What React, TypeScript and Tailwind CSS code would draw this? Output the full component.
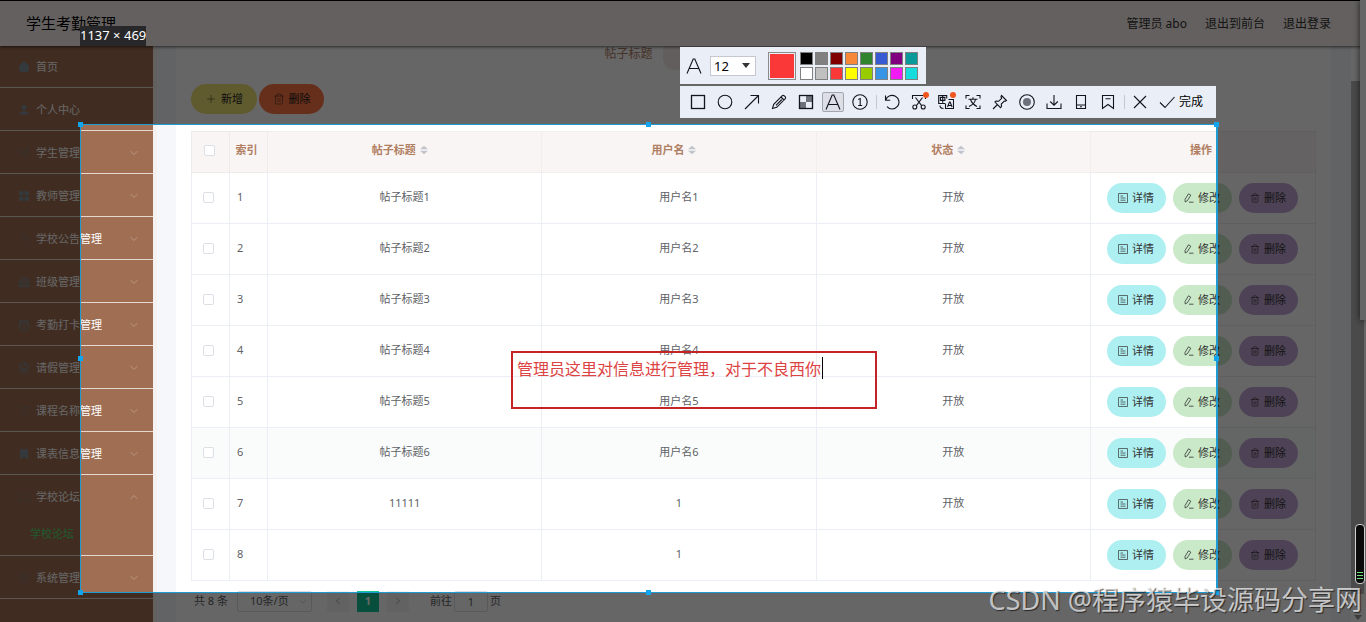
import { useState } from 'react';
import type { ReactNode } from 'react';
import {
  Bookmark,
  Building2,
  CalendarCheck,
  ChevronDown,
  ChevronLeft,
  ChevronRight,
  ChevronUp,
  FileText,
  House,
  LayoutGrid,
  List,
  MessageSquare,
  Plus,
  Send,
  Settings,
  Trash2,
  User,
} from 'lucide-react';
import type { LucideIcon } from 'lucide-react';

type MenuEntry = { name: string; icon: LucideIcon; tone: string; arrow?: boolean; children?: string[] };

const menu: MenuEntry[] = [
  { name: '首页', icon: House, tone: 'text-[#7f8f98] fill-[#7f8f98]' },
  { name: '个人中心', icon: User, tone: 'text-[#7f8f98] fill-[#7f8f98]' },
  { name: '学生管理', icon: Send, tone: 'text-[#8f7c72]', arrow: true },
  { name: '教师管理', icon: LayoutGrid, tone: 'text-[#7f8f98] fill-[#7f8f98]', arrow: true },
  { name: '学校公告管理', icon: List, tone: 'text-[#8f7c72]', arrow: true },
  { name: '班级管理', icon: Building2, tone: 'text-[#7f8f98]', arrow: true },
  { name: '考勤打卡管理', icon: CalendarCheck, tone: 'text-[#7f8f98]', arrow: true },
  { name: '请假管理', icon: FileText, tone: 'text-[#7f8f98]', arrow: true },
  { name: '课程名称管理', icon: List, tone: 'text-[#8f7c72]', arrow: true },
  { name: '课表信息管理', icon: Bookmark, tone: 'text-[#7f8f98] fill-[#7f8f98]', arrow: true },
  { name: '学校论坛', icon: MessageSquare, tone: 'text-[#8f7c72]', arrow: true, children: ['学校论坛'] },
  { name: '系统管理', icon: Settings, tone: 'text-[#8f7c72]', arrow: true },
];

const posts = [
  { id: 1, title: '帖子标题1', user: '用户名1', status: '开放' },
  { id: 2, title: '帖子标题2', user: '用户名2', status: '开放' },
  { id: 3, title: '帖子标题3', user: '用户名3', status: '开放' },
  { id: 4, title: '帖子标题4', user: '用户名4', status: '开放' },
  { id: 5, title: '帖子标题5', user: '用户名5', status: '开放' },
  { id: 6, title: '帖子标题6', user: '用户名6', status: '开放' },
  { id: 7, title: '11111', user: '1', status: '开放' },
  { id: 8, title: '', user: '1', status: '' },
];

const palette = [
  { name: '黑色', bg: 'bg-black' },
  { name: '灰色', bg: 'bg-[#808080]' },
  { name: '深红', bg: 'bg-[#800000]' },
  { name: '橙色', bg: 'bg-[#f7883a]' },
  { name: '绿色', bg: 'bg-[#308430]' },
  { name: '蓝色', bg: 'bg-[#385ad3]' },
  { name: '紫色', bg: 'bg-[#800080]' },
  { name: '青色', bg: 'bg-[#099a99]' },
  { name: '白色', bg: 'bg-white' },
  { name: '浅灰', bg: 'bg-[#c0c0c0]' },
  { name: '红色', bg: 'bg-[#fb3838]' },
  { name: '黄色', bg: 'bg-[#ffff00]' },
  { name: '草绿', bg: 'bg-[#99cc00]' },
  { name: '天蓝', bg: 'bg-[#3894e4]' },
  { name: '洋红', bg: 'bg-[#f31bf3]' },
  { name: '亮青', bg: 'bg-[#16dcdc]' },
];

const Glyph = ({ children }: { children: ReactNode }) => (
  <svg viewBox="0 0 16 16" className="size-4" fill="none" stroke="#14141f" strokeWidth="1.1">
    {children}
  </svg>
);

const LetterA = () => (
  <Glyph>
    <path d="M1 15.5 7.2 1h1.6L15 15.5M3.6 10.5h8.8" />
  </Glyph>
);

const shapeTools = [
  { name: '矩形', icon: <Glyph><rect x="1.5" y="1.5" width="13" height="13" strokeWidth="1.3" /></Glyph> },
  { name: '椭圆', icon: <Glyph><circle cx="8" cy="8" r="6.8" /></Glyph> },
  { name: '箭头', icon: <Glyph><path d="M1 15 14.5 1.5M6.5 1.5h8v8" /></Glyph> },
  { name: '画笔', icon: <Glyph><path d="m1.5 14.5 1.2-4.2 8.600-8.600q.9-.7 1.800 0l1.200 1.200q.7.9 0 1.800l-8.600 8.600zM10 3l3 3M5 11.300l5.800-5.800" /></Glyph> },
  {
    name: '马赛克',
    icon: (
      <Glyph>
        <path d="M8 2h6v6H8zM2 8h6v6H2z" fill="#6d717b" stroke="none" />
        <rect x="1.5" y="1.5" width="13" height="13" strokeWidth="1.3" />
      </Glyph>
    ),
  },
  { name: '文字', icon: <LetterA />, active: true },
  { name: '序号', icon: <Glyph><circle cx="8" cy="8" r="7.2" /><path d="M6.3 5.4 8.2 4.5v7M6.2 11.5h4" /></Glyph> },
];

const actionTools = [
  { name: '撤销', icon: <Glyph><path d="M1.5 1.5v4.7h4.7M1.7 6A6.8 6.8 0 1 1 3 12.6" /></Glyph> },
  {
    name: '截图',
    badge: true,
    icon: (
      <Glyph>
        <path d="M1.5 5V1.5h13V5M4.5 3.5l6.3 8.3M11.5 3.5l-6.3 8.3" />
        <circle cx="3.8" cy="13" r="2" />
        <circle cx="12.2" cy="13" r="2" />
      </Glyph>
    ),
  },
  {
    name: '翻译',
    badge: true,
    icon: (
      <Glyph>
        <path d="M7 9.5H.7V1.5h8v3M2.4 3.4h4.5v3H2.4zM4.7 2v6.8" />
        <path d="M10.5 5.5h5v9h-8v-5M9.5 13l2-5h.6l2 5M10 11.5h3.5M2 11.5q0 3 3.5 3" />
      </Glyph>
    ),
  },
  { name: '文字识别', icon: <Glyph><path d="M1 4.5V1.5h3.5M11.5 1.5H15v3M15 11.5v3h-3.5M4.5 14.5H1v-3M3.5 5.2h9M8 3.2v2M4 12.5q5.5-2.5 6.5-7M5.5 5.5q1.5 4.5 6.5 7" /></Glyph> },
  { name: '钉住', icon: <Glyph><path d="M9.5 1.5l5 5-1 .7-1.2-.2-3 3 .2 2.6-1 1L3 8.1l1-1 2.6.2 3-3-.6-1.6zM5.5 10.5 1 15" /></Glyph> },
  { name: '录屏', icon: <Glyph><circle cx="8" cy="8" r="7.3" /><circle cx="8" cy="8" r="4" fill="#6d717b" stroke="none" /></Glyph> },
  { name: '保存', icon: <Glyph><path d="M8 1v10M4.2 7.5 8 11.2l3.8-3.7M1 9.5v5h14v-5" /></Glyph> },
  { name: '发送到手机', icon: <Glyph><path d="M3.5 1.5h9v13h-9zM3.5 11h9M7 12.8h2" /></Glyph> },
  { name: '收藏', icon: <Glyph><path d="M2.5 1.5h11v13L8 10.5l-5.5 4zM5.5 4.8h5" /></Glyph> },
];

const ToolButton = ({ name, icon, active, badge }: { name: string; icon: ReactNode; active?: boolean; badge?: boolean }) => (
  <button aria-label={name} title={name} className="relative flex w-[27px] items-center justify-center">
    <span className={active ? 'flex h-5 w-[22px] items-center justify-center rounded-xs border border-[#a3a6ad] bg-[#dcdfe6]' : 'flex'}>
      {icon}
    </span>
    {badge && <span className="absolute -top-0.5 right-1 size-1.5 rounded-full bg-[#f0561d]" />}
  </button>
);

const SortMark = () => (
  <svg viewBox="0 0 8 10" className="inline-block h-2.5 w-2 fill-[#c0c4cc]">
    <path d="M0 4.2 4 .8l4 3.4zM0 5.8h8L4 9.2z" />
  </svg>
);

const DetailIcon = () => (
  <svg viewBox="0 0 10 10" className="size-2.5" fill="none" stroke="currentColor" strokeWidth=".7">
    <path d="M.5.5h9v9h-9zM2.500 3h2.500M2.500 5h5M2.500 7.200h5" />
  </svg>
);

const EditIcon = () => (
  <svg viewBox="0 0 10 10" className="size-2.5" fill="none" stroke="currentColor" strokeWidth=".8">
    <path d="M1.2 9 1 6.500 4.500.8l2.300 1.400-3.500 5.600zM5 9.200h4.500" />
  </svg>
);

const pill = 'flex h-[30px] w-[59px] items-center justify-center gap-1 rounded-full text-[11px] text-[#333]';
const tick = 'mx-auto block size-[11px] appearance-none rounded-xs border border-[#dcdfe6] bg-white';

const Sidebar = () => (
  <nav className="-mt-px w-[153px] shrink-0 bg-[#a06e52] text-[11px] text-white">
    <ul>
      {menu.map((m) => (
        <li key={m.name} className="border-b border-[#e6d8d0]">
          <a href="#" className="flex h-[42px] items-center pt-0.5 pr-[13px] pl-[18px]">
            <m.icon className={`size-3 ${m.tone}`} strokeWidth={2} />
            <span className="ml-1.5 flex-1">{m.name}</span>
            {m.arrow && !m.children && <ChevronDown className="size-3 text-[#c3a391]" strokeWidth={1.5} />}
            {m.children && <ChevronUp className="size-3 text-[#c3a391]" strokeWidth={1.5} />}
          </a>
          {m.children?.map((c) => (
            <a key={c} href="#" className="flex h-[38px] items-center pb-1 pl-[30px] text-[#4fe070]">
              {c}
            </a>
          ))}
        </li>
      ))}
    </ul>
  </nav>
);

const PostTable = () => (
  <table className="mt-[17px] w-full table-fixed border-collapse border border-[#ebeef5] text-center text-[11px] text-[#606266]">
    <colgroup>
      <col className="w-[38px]" />
      <col className="w-[38px]" />
      <col />
      <col />
      <col />
      <col className="w-[225px]" />
    </colgroup>
    <thead className="bg-[#f9f5f4] text-[#b07e62]">
      <tr className="h-[41px]">
        <th className="border border-[#efebeb] p-0 pr-0.5 pb-1">
          <input type="checkbox" aria-label="全选" className={tick} />
        </th>
        <th className="border border-[#efebeb] p-0 pr-1 pb-1">索引</th>
        {['帖子标题', '用户名', '状态'].map((h) => (
          <th key={h} className="border border-[#f2eeee] p-0 pr-2.5 pb-1">
            <span className="inline-flex items-center gap-1">
              {h} <SortMark />
            </span>
          </th>
        ))}
        <th className="border border-[#efebeb] p-0 pr-1 pb-1">操作</th>
      </tr>
    </thead>
    <tbody>
      {posts.map((p) => (
        <tr key={p.id} className={p.id === 6 ? 'h-[51px] bg-[#fafcfc]' : 'h-[51px]'}>
          <td className="border border-[#ebeef5] p-0 pr-1 pb-0.5">
            <input type="checkbox" aria-label={`选择第${p.id}行`} className={tick} />
          </td>
          <td className="border border-[#ebeef5] p-0 pb-0.5 pl-[7px] text-left">{p.id}</td>
          <td className="border border-[#ebeef5] p-0 pb-0.5">{p.title}</td>
          <td className="border border-[#ebeef5] p-0 pb-0.5">{p.user}</td>
          <td className="border border-[#ebeef5] p-0 pb-0.5">{p.status}</td>
          <td className="border border-[#ebeef5] p-0 pr-0.5">
            <div className="flex justify-center gap-[7px]">
              <button className={`${pill} bg-[#aef0f2]`}><DetailIcon />详情</button>
              <button className={`${pill} bg-[#c9e9c9]`}><EditIcon />修改</button>
              <button className={`${pill} bg-[#c4a8d6]`}><Trash2 className="size-2.5" strokeWidth={1.5} />删除</button>
            </div>
          </td>
        </tr>
      ))}
    </tbody>
  </table>
);

const Pagination = () => (
  <div className="mt-[9px] flex h-[22px] items-center text-[11px] text-[#606266]">
    <span className="ml-[3px]">共 8 条</span>
    <div className="relative ml-[9px]">
      <select aria-label="每页条数" className="block h-[21px] w-[75px] appearance-none rounded-xs border border-[#dcdfe6] pl-3 text-[11px]">
        <option>10条/页</option>
      </select>
      <ChevronDown className="pointer-events-none absolute top-1.5 right-1 size-2.5 text-[#c0c4cc]" />
    </div>
    <button aria-label="上一页" className="ml-[15px] flex h-[21px] w-[22px] items-center justify-center bg-[#f4f4f5] text-[#a8abb2]">
      <ChevronLeft className="size-3" />
    </button>
    <button className="ml-2 h-[21px] w-[22px] bg-[#12c296] font-bold text-white">1</button>
    <button aria-label="下一页" className="ml-2 flex h-[21px] w-[22px] items-center justify-center bg-[#f4f4f5] text-[#a8abb2]">
      <ChevronRight className="size-3" />
    </button>
    <label className="ml-[21px] flex items-center gap-0.5">
      前往
      <input defaultValue="1" className="h-[21px] w-[34px] rounded-xs border border-[#dcdfe6] text-center text-[11px]" />
      页
    </label>
  </div>
);

const CaptureTools = () => {
  const [size, setSize] = useState('12');

  return (
    <div className="absolute top-[47px] right-[150px] flex flex-col items-start gap-0.5 text-black">
      <div className="flex h-[37px] items-center bg-[#e9eef7] pr-2 pl-1.5">
        <LetterA />
        <div className="relative ml-2">
          <select
            aria-label="字号"
            value={size}
            onChange={(e) => setSize(e.target.value)}
            className="block h-5 w-[46px] appearance-none border border-[#c5c8ce] bg-white pl-[3px] text-[13px] leading-4"
          >
            <option>12</option>
            <option>14</option>
            <option>16</option>
          </select>
          <svg viewBox="0 0 8 5" className="pointer-events-none absolute top-[7px] right-1.5 h-[5px] w-2 fill-[#333]">
            <path d="M0 0h8L4 5z" />
          </svg>
        </div>
        <button aria-label="当前颜色" className="ml-3 size-7 border border-[#8a8a8a] bg-[#fb3838] bg-clip-content p-px" />
        <div className="ml-1 grid grid-cols-8 gap-0.5">
          {palette.map((c) => (
            <button key={c.name} aria-label={c.name} className={`size-[13px] border border-[#808080] ${c.bg}`} />
          ))}
        </div>
      </div>

      <div className="flex h-8 items-center bg-[#e9eef7] pr-[13px] pl-[5px]">
        {shapeTools.map((t) => (
          <ToolButton key={t.name} {...t} />
        ))}
        <span className="mx-0.5 h-3.5 w-px bg-[#c3c7cf]" />
        {actionTools.map((t) => (
          <ToolButton key={t.name} {...t} />
        ))}
        <span className="mx-0.5 h-3.5 w-px bg-[#c3c7cf]" />
        <ToolButton name="取消" icon={<Glyph><path d="m2 2 12 12M14 2 2 14" /></Glyph>} />
        <button className="flex items-center gap-1 pl-[5px] text-xs">
          <Glyph><path d="m1 8.5 5 5L15.5 3" /></Glyph>
          完成
        </button>
      </div>
    </div>
  );
};

const handles = [
  '-top-[3px] -left-[3px]',
  '-top-[3px] left-[calc(50%-3px)]',
  '-top-[3px] -right-[3px]',
  'top-[calc(50%-3px)] -left-[3px]',
  'top-[calc(50%-3px)] -right-[3px]',
  '-bottom-[3px] -left-[3px]',
  '-bottom-[3px] left-[calc(50%-3px)]',
  '-bottom-[3px] -right-[3px]',
];

const CaptureLayer = () => (
  <>
    {/* everything outside the selection is dimmed by its shadow */}
    <div className="pointer-events-none absolute top-[124px] right-[148px] left-20 h-[469px] border border-r-2 border-[#1f9bd3] shadow-[0_0_0_3000px_rgba(0,0,0,0.6)]">
      {handles.map((h) => (
        <span key={h} className={`absolute size-[5px] bg-[#12a5ee] ${h}`} />
      ))}
    </div>
    <div className="absolute top-[26px] left-20 h-5 bg-[#28282a] text-[13px] leading-[18px] whitespace-nowrap text-white">1137 × 469</div>

    <div className="absolute top-[351px] left-[511px] flex h-[58px] w-[366px] items-start border-2 border-[#c42427] pt-1 pl-1">
      <input aria-label="标注文字" defaultValue="管理员这里对信息进行管理，对于不良西你" className="h-6 w-[305px] text-base text-[#dd4343]" />
      <span className="h-[22px] w-px bg-black" />
    </div>

    <CaptureTools />
  </>
);

const App = () => (
  <div className="relative flex min-h-screen flex-col overflow-hidden bg-white font-['Noto_Sans','Noto_Sans_CJK_SC',sans-serif]">
    <header className="relative z-10 flex h-[46px] items-center justify-between border-t border-black bg-[#f7f1ed] pr-[35px] pl-[26px] text-[#333] shadow-[0_1px_3px_rgba(0,0,0,0.6)]">
      <h1 className="text-[15px] text-black">学生考勤管理</h1>
      <div className="flex gap-[18px] text-xs">
        <span>管理员 abo</span>
        <a href="#">退出到前台</a>
        <a href="#">退出登录</a>
      </div>
    </header>

    <div className="flex flex-1">
      <Sidebar />
      <main className="flex min-w-0 flex-1 overflow-hidden border-l-4 border-[#f6f2f1] bg-[#f5f7fb] pr-5 pl-[19px]">
        <section className="min-w-0 flex-1 bg-white px-[15px]">
          <form className="-mt-[10px] flex h-9 items-center justify-center gap-2.5 text-xs text-[#b07e62]">
            <label htmlFor="title">帖子标题</label>
            <input id="title" className="h-8 w-[240px] rounded-xl bg-[#f3ebe9]" />
          </form>
          <div className="mt-3 flex gap-0.5">
            <button className="flex h-[30px] w-[66px] items-center justify-center gap-1 rounded-full bg-[#ede373] text-[11px] text-[#222]">
              <Plus className="size-3" strokeWidth={1} />新增
            </button>
            <button className="flex h-[30px] w-[65px] items-center justify-center gap-1 rounded-full bg-[#ff7544] text-[11px] text-[#222]">
              <Trash2 className="size-3" strokeWidth={1} />删除
            </button>
          </div>
          <PostTable />
          <Pagination />
        </section>
      </main>
      <div className="mt-[35px] mr-0.5 mb-7 w-[13px] bg-[#b8b8b8]" />
    </div>

    <div className="absolute top-0 right-0 z-10 h-80 w-1.5 bg-white shadow-[0_0_6px_rgba(0,0,0,0.7)]" />

    <div className="absolute inset-0 z-20">
      <CaptureLayer />
      <div className="absolute right-px bottom-[38px] flex h-[60px] w-2.5 flex-col justify-end gap-0.5 rounded-sm border border-[#d0d0d0] bg-[#0a0a0a] px-px pb-1">
        <span className="h-px bg-[#6ee07a]" />
        <span className="h-px bg-[#6ee07a]" />
        <span className="h-px bg-[#6ee07a]" />
      </div>
      <svg viewBox="0 0 8 5" className="absolute right-1 bottom-0.5 h-[5px] w-2 fill-[#3c3c3c]">
        <path d="M0 0h8L4 5z" />
      </svg>
      <p className="absolute right-1 bottom-1 text-[27px] leading-9 whitespace-nowrap text-white/70 [text-shadow:1px_1px_1px_rgba(0,0,0,0.6)]">CSDN @程序猿毕设源码分享网</p>
    </div>
  </div>
);

export default App;
